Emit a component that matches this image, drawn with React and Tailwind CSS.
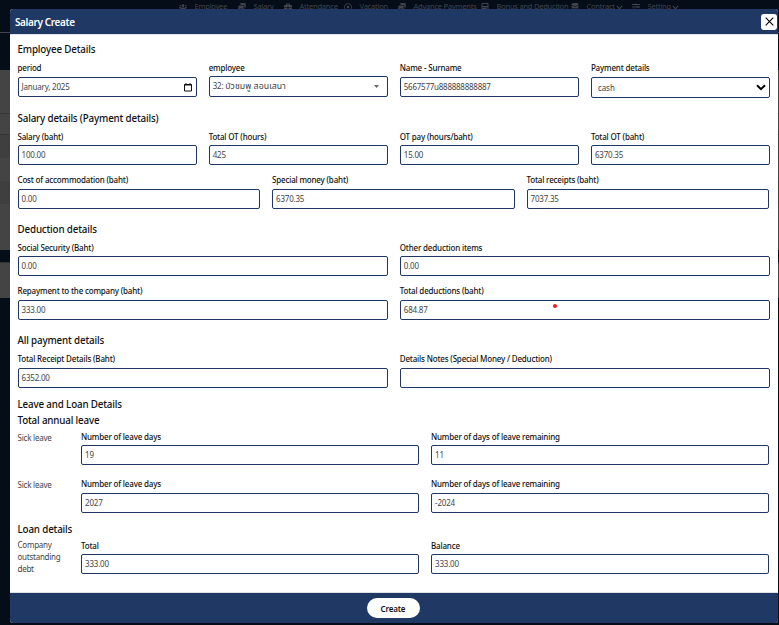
import { FaUsers, FaMoneyBillWave, FaBriefcase, FaRegDotCircle, FaCoins, FaCalculator, FaDatabase, FaSlidersH, FaChevronDown } from "react-icons/fa";

const nav = [
  { label: "Employee", Icon: FaUsers, cls: "ml-[179px] w-[59px]" },
  { label: "Salary", Icon: FaCoins, cls: "w-[46px]" },
  { label: "Attendance", Icon: FaBriefcase, cls: "w-[60px]" },
  { label: "Vacation", Icon: FaRegDotCircle, cls: "w-[54px]" },
  { label: "Advance Payments", Icon: FaCoins, cls: "w-[83px]" },
  { label: "Bonus and Deduction", Icon: FaCalculator, cls: "w-[90px]" },
  { label: "Contract", Icon: FaDatabase, cls: "w-[61px]", arrow: true },
  { label: "Setting", Icon: FaSlidersH, cls: "w-[50px]", arrow: true },
];

function Heading({ children, className = "" }) {
  return (
    <h2 className={`flex h-4 items-center whitespace-nowrap pt-0.5 text-[9.8px] font-medium tracking-[-0.16px] text-[#111] ${className}`}>
      {children}
    </h2>
  );
}

function Label({ children }) {
  return (
    <div className="flex h-3.5 items-center whitespace-nowrap text-[8px] font-medium tracking-[-0.18px] text-[#111]">
      {children}
    </div>
  );
}

function Field({ label, value, gap = "mt-px", box = "h-5", children }) {
  return (
    <div className="min-w-0">
      <Label>{label}</Label>
      <div className={`flex items-center rounded-[2px] border border-[#1f3762] bg-white px-[3px] text-[8px] tracking-[-0.2px] text-[#444] ${gap} ${box}`}>
        <span className="whitespace-pre">{value}</span>
        {children}
      </div>
    </div>
  );
}

function Calendar() {
  return (
    <svg className="mr-[1px] ml-auto h-[9px] w-2" viewBox="0 0 8 9" fill="none" stroke="#111">
      <path d="M.5 1.5h7v6.5h-7z" />
      <path d="M0 2h8M2 0v1.5M6 0v1.5" />
    </svg>
  );
}

export default function App() {
  return (
    <div className="relative h-[625px] w-[779px] overflow-hidden bg-[#050d18] font-['Noto_Sans','Noto_Sans_Thai',sans-serif]">
      <div className="flex h-8 items-start pt-px text-[7.5px] tracking-[-0.22px] text-[#41454c]">
        {nav.map(({ label, Icon, cls, arrow }) => (
          <div key={label} className={`flex h-3 shrink-0 items-center whitespace-nowrap ${cls}`}>
            <Icon className="mr-[7.5px] h-2 w-2 shrink-0" />
            {label}
            {arrow && <FaChevronDown className="ml-[1px] h-[7px] w-[7px] shrink-0" />}
          </div>
        ))}
      </div>
      <div className="h-px bg-[#42464c]" />
      <div className="h-[37px]" />
      <div className="h-[44px] border-b border-[#353535] bg-[#444]" />
      <div className="h-[21px] border-b border-[#353535] bg-[#444]" />
      <div className="h-[23px] bg-[#3f3f3f]" />
      <div className="h-[23px] bg-[#444]" />
      <div className="h-[23px] bg-[#3f3f3f]" />
      <div className="h-[46px] bg-[#444]" />
      <div className="h-3" />
      <div className="h-9 border-t border-[#333] bg-[#444]" />

      <div className="absolute top-[9px] left-[10px] flex h-[614px] w-[768px] flex-col overflow-hidden rounded-[3px] bg-white">
        <header className="flex h-[26px] shrink-0 items-center justify-between border-b border-[#dee2e6] bg-[#203864] pr-[1px] pl-[5px]">
          <h1 className="pt-px text-[10px] font-semibold tracking-[-0.38px] text-white">Salary Create</h1>
          <button className="flex h-4 w-4 items-center justify-center rounded-[3px] bg-white">
            <svg className="h-[9px] w-[9px]" viewBox="0 0 9 9" stroke="#000" strokeWidth="1.1">
              <path d="M.7.7l7.6 7.6M8.3.7L.7 8.3" />
            </svg>
          </button>
        </header>

        <main className="flex-1 pr-2 pl-[7.5px]">
          <Heading className="mt-1.5">Employee Details</Heading>
          <div className="mt-1 grid grid-cols-4 gap-x-3">
            <Field label="period" value="January, 2025" gap="mt-0.5"><Calendar /></Field>
            <Field label="employee" value={<>32: <span className="text-[8.8px] tracking-[0.02px]">บัวชมพู สอนเสนา</span></>} box="h-[21px]">
              <svg className="mr-[5px] ml-auto h-[3px] w-[5px]" viewBox="0 0 5 3" fill="#666"><path d="M0 0h5L2.5 3z" /></svg>
            </Field>
            <Field label="Name - Surname" value={<span className="tracking-[-0.25px]">5667577u888888888887</span>} gap="mt-0.5" />
            <Field label="Payment details" value={<span className="pl-[3px] tracking-[-0.05px]">cash</span>} gap="mt-0.5" box="h-[21px]">
              <svg className="ml-auto h-[7px] w-[10px]" viewBox="0 0 10 7" fill="none" stroke="#000" strokeWidth="2"><path d="M1 1.2l4 4 4-4" /></svg>
            </Field>
          </div>

          <Heading className="mt-3">Salary details (Payment details)</Heading>
          <div className="mt-1 grid grid-cols-4 gap-x-3">
            <Field label="Salary (baht)" value="100.00" />
            <Field label="Total OT (hours)" value="425" />
            <Field label="OT pay (hours/baht)" value="15.00" />
            <Field label="Total OT (baht)" value="6370.35" />
          </div>
          <div className="mt-2 grid grid-cols-3 gap-x-3 pr-px">
            <Field label="Cost of accommodation (baht)" value="0.00" gap="mt-0.5" />
            <Field label="Special money (baht)" value="6370.35" gap="mt-0.5" />
            <Field label="Total receipts (baht)" value="7037.35" gap="mt-0.5" />
          </div>

          <Heading className="mt-3">Deduction details</Heading>
          <div className="mt-1 grid grid-cols-2 gap-x-3">
            <Field label="Social Security (Baht)" value="0.00" />
            <Field label="Other deduction items" value="0.00" />
          </div>
          <div className="mt-2 grid grid-cols-2 gap-x-3">
            <Field label="Repayment to the company (baht)" value="333.00" gap="mt-0.5" />
            <Field label="Total deductions (baht)" value="684.87" gap="mt-0.5">
              <span className="mb-2 ml-[125px] h-1 w-1 rounded-full bg-[#ee1c24]" />
            </Field>
          </div>

          <Heading className="mt-3">All payment details</Heading>
          <div className="mt-1 grid grid-cols-2 gap-x-3">
            <Field label="Total Receipt Details (Baht)" value="6352.00" gap="mt-0.5" />
            <Field label="Details Notes (Special Money / Deduction)" value="" gap="mt-0.5" />
          </div>

          <Heading className="mt-2">Leave and Loan Details</Heading>
          <Heading>Total annual leave</Heading>
          <div className="mt-0.5 grid grid-cols-[51.5px_1fr_1fr] gap-x-3 pr-px">
            <div className="mt-px text-[8px] leading-[14px] tracking-[-0.22px] whitespace-nowrap text-[#444]">Sick leave</div>
            <Field label="Number of leave days" value="19" />
            <Field label="Number of days of leave remaining" value="11" />
          </div>
          <div className="mt-3 grid grid-cols-[51.5px_1fr_1fr] gap-x-3 pr-px">
            <div className="mt-px text-[8px] leading-[14px] tracking-[-0.22px] whitespace-nowrap text-[#444]">Sick leave</div>
            <Field label="Number of leave days" value="2027" gap="mt-0.5" />
            <Field label="Number of days of leave remaining" value="-2024" gap="mt-0.5" />
          </div>

          <Heading className="mt-2">Loan details</Heading>
          <div className="mt-0.5 grid grid-cols-[51.5px_1fr_1fr] gap-x-3 pr-px">
            <div className="h-[35px] text-[8px] leading-3 tracking-[-0.25px] text-[#444]">Company<br />outstanding<br />debt</div>
            <Field label="Total" value="333.00" />
            <Field label="Balance" value="333.00" />
          </div>
        </main>

        <footer className="flex h-[31px] shrink-0 items-center justify-center border-t border-[#dee2e6] bg-[#203864] pr-0.5">
          <button className="h-5 w-[53px] rounded-full bg-white pt-px text-[8px] font-semibold tracking-[-0.15px] text-[#111]">Create</button>
        </footer>
      </div>
    </div>
  );
}
